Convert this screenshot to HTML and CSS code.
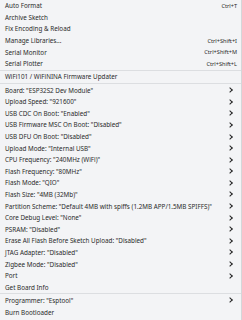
FILE: index.html
```html
<!DOCTYPE html>
<html>
<head>
<meta charset="utf-8">
<link rel="stylesheet" href="styles.css">
</head>
<body>
<div class="menu">
  <div class="scroll-mark"></div>
  <div class="item"><span class="label">Auto Format</span><span class="key">Ctrl+T</span></div>
  <div class="item"><span class="label">Archive Sketch</span></div>
  <div class="item"><span class="label">Fix Encoding &amp; Reload</span></div>
  <div class="item"><span class="label">Manage Libraries...</span><span class="key">Ctrl+Shift+I</span></div>
  <div class="item"><span class="label">Serial Monitor</span><span class="key">Ctrl+Shift+M</span></div>
  <div class="item"><span class="label">Serial Plotter</span><span class="key">Ctrl+Shift+L</span></div>
  <div class="sep"></div>
  <div class="item"><span class="label">WiFi101 / WiFiNINA Firmware Updater</span></div>
  <div class="sep"></div>
  <div class="item"><span class="label">Board: "ESP32S2 Dev Module"</span><span class="chev"></span></div>
  <div class="item"><span class="label">Upload Speed: "921600"</span><span class="chev"></span></div>
  <div class="item"><span class="label">USB CDC On Boot: "Enabled"</span><span class="chev"></span></div>
  <div class="item"><span class="label">USB Firmware MSC On Boot: "Disabled"</span><span class="chev"></span></div>
  <div class="item"><span class="label">USB DFU On Boot: "Disabled"</span><span class="chev"></span></div>
  <div class="item"><span class="label">Upload Mode: "Internal USB"</span><span class="chev"></span></div>
  <div class="item"><span class="label">CPU Frequency: "240MHz (WiFi)"</span><span class="chev"></span></div>
  <div class="item"><span class="label">Flash Frequency: "80MHz"</span><span class="chev"></span></div>
  <div class="item"><span class="label">Flash Mode: "QIO"</span><span class="chev"></span></div>
  <div class="item"><span class="label">Flash Size: "4MB (32Mb)"</span><span class="chev"></span></div>
  <div class="item"><span class="label">Partition Scheme: "Default 4MB with spiffs (1.2MB APP/1.5MB SPIFFS)"</span><span class="chev"></span></div>
  <div class="item"><span class="label">Core Debug Level: "None"</span><span class="chev"></span></div>
  <div class="item"><span class="label">PSRAM: "Disabled"</span><span class="chev"></span></div>
  <div class="item"><span class="label">Erase All Flash Before Sketch Upload: "Disabled"</span><span class="chev"></span></div>
  <div class="item"><span class="label">JTAG Adapter: "Disabled"</span><span class="chev"></span></div>
  <div class="item"><span class="label">Zigbee Mode: "Disabled"</span><span class="chev"></span></div>
  <div class="item"><span class="label">Port</span><span class="chev"></span></div>
  <div class="item"><span class="label">Get Board Info</span></div>
  <div class="sep"></div>
  <div class="item"><span class="label">Programmer: "Esptool"</span><span class="chev"></span></div>
  <div class="item"><span class="label">Burn Bootloader</span></div>
</div>
</body>
</html>
```
FILE: styles.css
```css
html, body {
  margin: 0;
  padding: 0;
  background: #f3f4f6;
}
.menu {
  position: relative;
  width: 241px;
  height: 320px;
  border-right: 1px solid #d4d6d9;
  background: #f3f4f6;
  font-family: "Noto Sans", "Open Sans", sans-serif;
  font-size: 6.3px;
  color: #2a2a2a;
  display: flex;
  flex-direction: column;
  overflow: hidden;
}
.scroll-mark {
  position: absolute;
  right: -1px;
  top: 0;
  width: 1px;
  height: 32px;
  background: #4a9a9c;
}
.item {
  height: 11.6px;
  display: flex;
  align-items: center;
  padding: 0 5px 0 5px;
  flex: none;
}
.label {
  flex: 1;
  white-space: nowrap;
}
.key {
  font-size: 5.6px;
  white-space: nowrap;
  margin-right: -1px;
}
.chev {
  width: 3px;
  height: 3px;
  border-right: 1.2px solid #222;
  border-bottom: 1.2px solid #222;
  transform: rotate(-45deg);
  margin-right: 4px;
}
.sep {
  height: 1px;
  background: #dcdee1;
  margin: 0.3px 0;
  flex: none;
}
```
